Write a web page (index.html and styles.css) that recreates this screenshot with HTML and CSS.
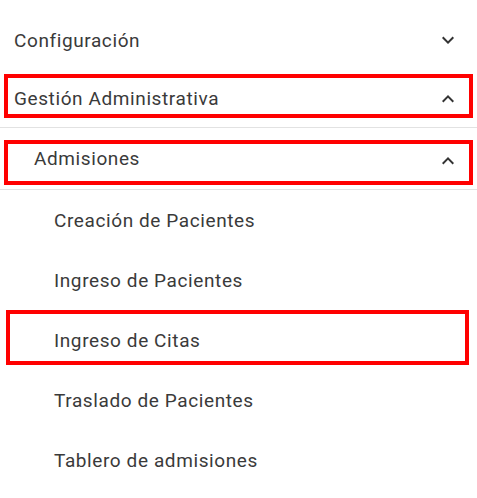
FILE: index.html
```html
<!DOCTYPE html>
<html lang="es">
<head>
<meta charset="utf-8">
<title>Menú</title>
<link rel="stylesheet" href="styles.css">
</head>
<body>
<nav class="menu">
  <div class="row top r-config">
    <span class="label">Configuración</span>
    <svg class="chev" viewBox="0 0 24 24" width="24" height="24"><path d="M16.59 8.59L12 13.17 7.41 8.59 6 10l6 6 6-6z"/></svg>
  </div>
  <div class="row top r-gestion">
    <span class="label">Gestión Administrativa</span>
    <svg class="chev" viewBox="0 0 24 24" width="24" height="24"><path d="M12 8l-6 6 1.41 1.41L12 10.83l4.59 4.58L18 14z"/></svg>
    <div class="mark mark-gestion"></div>
  </div>
  <div class="sep"></div>
  <div class="row sub r-admisiones">
    <span class="label">Admisiones</span>
    <svg class="chev" viewBox="0 0 24 24" width="24" height="24"><path d="M12 8l-6 6 1.41 1.41L12 10.83l4.59 4.58L18 14z"/></svg>
    <div class="mark mark-admisiones"></div>
  </div>
  <div class="sep"></div>
  <ul class="leaves">
    <li class="leaf">Creación de Pacientes</li>
    <li class="leaf">Ingreso de Pacientes</li>
    <li class="leaf">Ingreso de Citas<div class="mark mark-citas"></div></li>
    <li class="leaf">Traslado de Pacientes</li>
    <li class="leaf">Tablero de admisiones</li>
  </ul>
</nav>
</body>
</html>
```

FILE: styles.css
```css
html, body {
  margin: 0;
  padding: 0;
  background: #ffffff;
}
body {
  font-family: Roboto, "Liberation Sans", Arial, sans-serif;
  font-size: 19px;
  letter-spacing: 0.6px;
  color: #3a3a3a;
}
.menu {
  display: flex;
  flex-direction: column;
  padding-top: 10px;
}
.row {
  position: relative;
  display: flex;
  align-items: center;
  justify-content: space-between;
  padding-right: 17px;
}
.r-config {
  height: 60px;
  padding-left: 14px;
}
.r-gestion {
  height: 57px;
  padding-left: 14px;
}
.r-admisiones {
  height: 61px;
  padding-left: 34px;
}
.chev {
  fill: #333333;
  flex: none;
}
.r-admisiones .chev {
  margin-top: 4px;
}
.sep {
  height: 1px;
  background: #e2e2e2;
}
.leaves {
  list-style: none;
  margin: 0;
  padding: 0;
}
.leaf {
  position: relative;
  height: 60px;
  display: flex;
  align-items: center;
  padding-left: 54px;
}
.mark {
  position: absolute;
  border: 4px solid #ff0000;
  box-sizing: border-box;
  pointer-events: none;
}
.mark-gestion {
  left: 4px;
  right: 4px;
  top: 4px;
  height: 44px;
}
.mark-admisiones {
  left: 4px;
  right: 4px;
  top: 12px;
  height: 45px;
}
.mark-citas {
  left: 6px;
  right: 8px;
  top: 0;
  height: 55px;
}
```
